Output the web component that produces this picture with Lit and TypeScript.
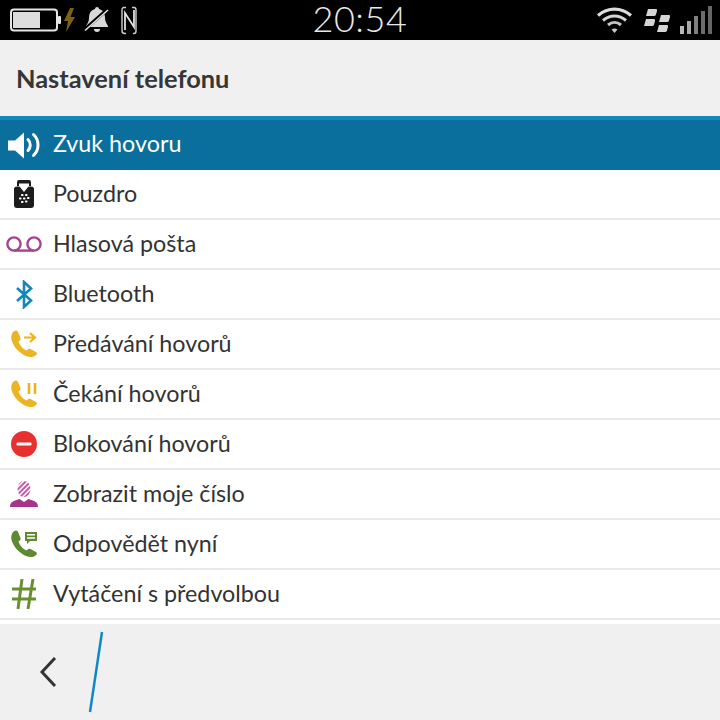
import { LitElement, html, css, svg } from "lit";
import { customElement } from "lit/decorators.js";

const handset = (c: string) => svg`<path d="M3 2C5 0 7 0 8 2l2.500 6c.5 1.500-.5 2.500-2 3.500 1 3.500 4.500 7.500 8 9 1.500-1.500 2.500-2 4-1.500l5.500 3c1.500 1 1 2.500-.5 3.500-2.500 2-6 2-9.500.5C9 23 3 16 1.500 10 .8 7 1.500 4 3 2z" fill="${c}"/>`;

const icons: Record<string, unknown> = {
  sound: html`<svg width="34" height="30" viewBox="0 0 34 30"><path d="M1 10.500h7l9-8v26l-9-8H1z" fill="#fff"/><path d="M21 9.500c3 3 3 8 0 11M26.500 4.500c6 5.500 6 15.500 0 21" fill="none" stroke="#fff" stroke-width="3" stroke-linecap="round"/></svg>`,
  holster: html`<svg width="22" height="30" viewBox="0 0 22 30"><path d="M4 7V3q0-2 2-2h10q2 0 2 2v4h-2V4.500H6V7z" fill="#1c1c1c"/><path d="M1 10q0-2.500 3-2.500h2.500L11 13l4.500-5.500H18q3 0 3 2.500v16q0 3-3 3H4q-3 0-3-3z" fill="#1c1c1c"/><g fill="#fff"><rect x="8" y="15" width="2.500" height="2" rx=".8"/><rect x="12" y="15" width="2.500" height="2" rx=".8"/><rect x="6" y="18.500" width="2.500" height="2" rx=".8"/><rect x="10" y="18.500" width="2.500" height="2" rx=".8"/><rect x="14" y="18" width="2.500" height="2" rx=".8"/><rect x="8" y="22" width="2.500" height="2" rx=".8"/><rect x="12" y="21.500" width="2.500" height="2" rx=".8"/></g></svg>`,
  voicemail: html`<svg width="36" height="16" viewBox="0 0 36 16"><g fill="none" stroke="#a8438f" stroke-width="2.400"><circle cx="8" cy="8" r="6.600"/><circle cx="28" cy="8" r="6.600"/><path d="M8 14.600h20"/></g></svg>`,
  bluetooth: html`<svg width="18" height="29" viewBox="0 0 18 29"><path d="M2 8l14 12.500L9 27V2l7 6.500L2 21" fill="none" stroke="#1288b8" stroke-width="2.600"/></svg>`,
  forward: html`<svg width="28" height="28" viewBox="0 0 28 28">${handset("#eab424")}<path d="M14 7.500h11M20 3l5 4.500-5 4.500" fill="none" stroke="#eab424" stroke-width="2.200"/></svg>`,
  waiting: html`<svg width="28" height="28" viewBox="0 0 28 28">${handset("#eab424")}<path d="M19 3v11M25 3v11" stroke="#eab424" stroke-width="2.600"/></svg>`,
  block: html`<svg width="26" height="26" viewBox="0 0 26 26"><circle cx="13" cy="13" r="13" fill="#e8312f"/><rect x="5.500" y="11.500" width="15" height="3" rx="1" fill="#fff"/></svg>`,
  caller: html`<svg width="28" height="26" viewBox="0 0 28 26"><defs><pattern id="st" width="3.500" height="3.500" patternUnits="userSpaceOnUse" patternTransform="rotate(45)"><rect width="2" height="3.500" fill="#bf52a3"/></pattern></defs><ellipse cx="14" cy="8" rx="6.500" ry="8" fill="url(#st)"/><path d="M0 26c0-5 3-6 9.500-8l4.500 3 4.500-3c6.500 2 9.500 3 9.500 8z" fill="#a8338a"/></svg>`,
  answer: html`<svg width="28" height="28" viewBox="0 0 28 28">${handset("#5f8a31")}<path d="M15 2h12v9h-7l-3 3v-3h-2z" fill="#5f8a31"/><path d="M17 4.800h8M17 8h8" stroke="#fff" stroke-width="1.400"/></svg>`,
  prefix: html`<svg width="26" height="30" viewBox="0 0 26 30"><path d="M11 0 7 30M22 0l-5 30M1 10h24M1 20h24" stroke="#6a8f2f" stroke-width="3" fill="none"/></svg>`,
};

const rows: [string, string][] = [
  ["sound", "Zvuk hovoru"],
  ["holster", "Pouzdro"],
  ["voicemail", "Hlasová pošta"],
  ["bluetooth", "Bluetooth"],
  ["forward", "Předávání hovorů"],
  ["waiting", "Čekání hovorů"],
  ["block", "Blokování hovorů"],
  ["caller", "Zobrazit moje číslo"],
  ["answer", "Odpovědět nyní"],
  ["prefix", "Vytáčení s předvolbou"],
];

@customElement("app-root")
export class AppRoot extends LitElement {
  static styles = css`
    :host { display: block; width: 720px; height: 720px; overflow: hidden; background: #fff; font-family: Lato, "Open Sans", sans-serif; color: #333; }
    .status { height: 40px; background: #000; display: grid; grid-template-columns: 1fr auto 1fr; align-items: center; }
    .left { display: flex; align-items: center; padding-left: 10px; }
    .left .bat { margin-right: 2px; }
    .left .bell { margin: 0 11px 0 9px; }
    .clock { font-family: Lato, sans-serif; font-weight: 300; font-size: 36px; line-height: 36px; padding-bottom: 4px; color: #e8e8e8; letter-spacing: 0.600px; }
    .right { display: flex; align-items: center; justify-content: flex-end; padding-right: 7px; }
    .wifi { margin-right: 10px; }
    .bb { margin-right: 9px; }
    .head { height: 76px; background: #f0f0f0; display: flex; align-items: center; padding-left: 16px; font-size: 25.400px; font-weight: 700; color: #363636; }
    .list { display: flex; flex-direction: column; }
    .row { height: 48px; border-bottom: 2px solid #e9e9e9; display: flex; align-items: center; font-size: 23.300px; color: #333; }
    .row.sel { height: 50px; border-bottom: 0; border-top: 4px solid #1088bb; background: #0a6f9c; color: #fff; }
    .row.sel .txt { padding-bottom: 4px; }
    .ico { width: 53px; display: flex; align-items: center; justify-content: center; padding-right: 5px; box-sizing: border-box; flex: none; }
    .ico svg { display: block; }
    .txt { padding-bottom: 2px; }
    .gap { height: 4px; background: #fff; }
    .foot { height: 96px; background: #f0f0f0; display: flex; align-items: center; }
    .foot .back { margin-left: 39px; }
    .foot .slash { margin-left: 31px; }
  `;

  render() {
    return html`
      <div class="status">
        <div class="left">
          <svg class="bat" width="52" height="24" viewBox="0 0 52 24"><rect x="1" y="1.500" width="46" height="21" rx="3" fill="none" stroke="#e6e6e6" stroke-width="2"/><rect x="3" y="4" width="27" height="16" fill="#dcdcdc"/><rect x="48" y="8" width="3" height="8" rx="1" fill="#e6e6e6"/></svg>
          <svg width="11" height="24" viewBox="0 0 11 24"><path d="M6 0 0 13h4l-2 11 9-15H6.500L10 0z" fill="#7d6116"/></svg>
          <svg class="bell" width="26" height="28" viewBox="0 0 26 28"><path d="M13 1c1.500 0 2 1 2 2 4 1 6 4 6 9 0 4 2 6 3 8v1H2v-1c1-2 3-4 3-8 0-5 2-8 6-9 0-1 .5-2 2-2z" fill="#d8d8d8"/><path d="M10 23h6c0 2-1 3-3 3s-3-1-3-3z" fill="#d8d8d8"/><path d="M0 24 25 2" stroke="#000" stroke-width="3.500"/><path d="M1 24.500 24 4" stroke="#e6e6e6" stroke-width="1.500"/></svg>
          <svg width="16" height="29" viewBox="0 0 16 29"><path d="M5 1.500H3Q1 1.500 1 4v21q0 2.500 3 2.500h1M11 1.500h2q2 0 2 2.500v21q0 2.500-2 2.500h-1" fill="none" stroke="#cfcfcf" stroke-width="1.400"/><path d="M4 24V7l9 14V4" fill="none" stroke="#e0e0e0" stroke-width="1.800"/></svg>
        </div>
        <div class="clock">20:54</div>
        <div class="right">
          <svg class="wifi" width="37" height="28" viewBox="0 0 37 28"><g fill="none"><path d="M2 9.500c10-8.500 23-8.500 33 0" stroke="#dcdcdc" stroke-width="3.200"/><path d="M7 14.500c7-6 16-6 23 0" stroke="#d4d4d4" stroke-width="3"/><path d="M12 19c4-3.500 9-3.500 13 0" stroke="#c4c4c4" stroke-width="3"/></g><path d="M15.500 23.500c2-1.500 4-1.500 6 0l-3 3.500z" fill="#c8c8c8"/></svg>
          <svg class="bb" width="28" height="25" viewBox="0 0 28 25" fill="#d6d6d6"><path d="M5 1h8q1.500 0 1 2l-1 3.500Q12.500 8 11 8H3z"/><path d="M18 7h8q1.500 0 1 2l-1 3.500q-.5 1.500-2 1.500h-8z"/><path d="M3 11h8q1.500 0 1 2l-1 3.500q-.5 1.500-2 1.500H1z"/><path d="M16 17h8q1.500 0 1 2l-1 3.500q-.5 1.500-2 1.500h-8z"/></svg>
          <svg width="33" height="28" viewBox="0 0 33 28"><rect x="0" y="20" width="4" height="8" fill="#b8b8b8"/><rect x="7" y="15" width="4" height="13" fill="#a8a8a8"/><rect x="14" y="10" width="4" height="18" fill="#808080"/><rect x="21" y="5" width="4" height="23" fill="#6c6c6c"/><rect x="28" y="0" width="4" height="28" fill="#666"/></svg>
        </div>
      </div>
      <div class="head">Nastavení telefonu</div>
      <div class="list">
        ${rows.map(([ic, t], i) => html`<div class="row ${i === 0 ? "sel" : ""}"><span class="ico">${icons[ic]}</span><span class="txt">${t}</span></div>`)}
      </div>
      <div class="gap"></div>
      <div class="foot">
        <svg class="back" width="18" height="32" viewBox="0 0 18 32"><path d="M16 2 3 16l13 14" fill="none" stroke="#333" stroke-width="3"/></svg>
        <svg class="slash" width="16" height="82" viewBox="0 0 16 82"><path d="M14 1 2 81" stroke="#1088c4" stroke-width="2.500"/></svg>
      </div>
    `;
  }
}
